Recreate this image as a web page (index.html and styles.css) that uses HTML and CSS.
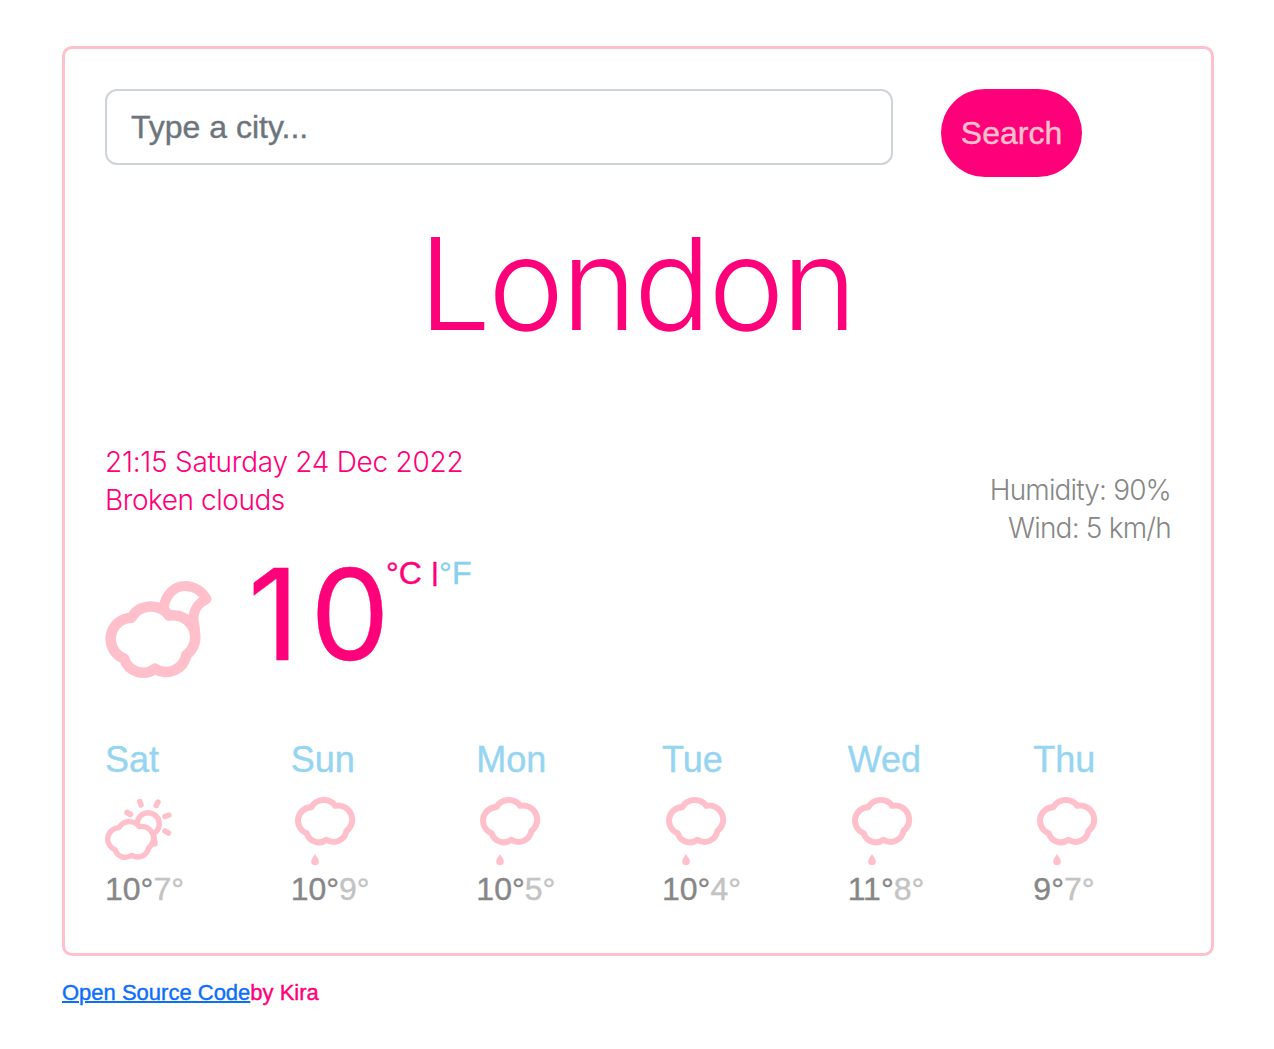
FILE: index.html
```html
<!DOCTYPE html>
<html lang="en">
<head>
<meta charset="utf-8">
<title>Weather</title>
<link rel="stylesheet" href="styles.css">
</head>
<body>
<svg width="0" height="0" class="defs">
  <defs>
    <path id="cloud" d="M26.500 37.700A21.200 21.200 0 0 0 19.300 78.700A19.700 19.700 0 0 0 50 88.700A20.500 20.500 0 0 0 81.300 75A22 22 0 0 0 64 35.700A22.500 22.500 0 0 0 26.500 37.700Z"/>
    <symbol id="rain" viewBox="0 0 68 70">
      <use href="#cloud" transform="translate(3.4 -14) scale(.64)" stroke-width="9.4"/>
      <path class="fill" d="M24 57C22.500 60 20.200 61.500 20.200 64.500A3.800 3.800 0 0 0 27.800 64.500C27.800 61.500 25.500 60 24 57Z"/>
    </symbol>
  </defs>
</svg>
<main class="card">
  <form class="search">
    <input class="city-input" type="text" placeholder="Type a city...">
    <button class="search-button" type="button">Search</button>
  </form>
  <h1 class="city">London</h1>
  <div class="overview">
    <ul class="summary">
      <li class="date">21:15 Saturday 24 Dec 2022</li>
      <li class="description">Broken clouds</li>
    </ul>
    <ul class="details">
      <li class="humidity">Humidity: 90%</li>
      <li class="wind">Wind: 5 km/h</li>
    </ul>
  </div>
  <div class="current">
    <svg class="icon current-icon" viewBox="0 0 108 100">
      <use href="#cloud" stroke-width="10.500"/>
      <path stroke-width="10" d="M58.500 29C60 14 70 6 80 6C89 6 97 11 101.500 19C93 23 88 31 88.500 40L90 50"/>
    </svg>
    <strong class="temperature"><span class="tens">1</span>0</strong>
    <span class="units">°C <span class="divider">|</span><span class="fahrenheit">°F</span></span>
  </div>
  <div class="forecast">
    <div class="day">
      <div class="name">Sat</div>
      <svg class="icon" viewBox="0 0 68 70">
        <use href="#cloud" transform="translate(-.3 10.300) scale(.54)" stroke-width="10"/>
        <path stroke-width="5.500" d="M32.500 24.500A11 11 0 1 1 48.500 36.500L50 47"/>
        <path stroke-width="5.500" d="M34.800 4.500L36 8M53 5L51.200 8.500M60 19.500L64 18M60 34L63.500 36M22 15.500L25.500 17.500"/>
      </svg>
      <div class="range">10°<span class="low">7°</span></div>
    </div>
    <div class="day">
      <div class="name">Sun</div>
      <svg class="icon"><use href="#rain"/></svg>
      <div class="range">10°<span class="low">9°</span></div>
    </div>
    <div class="day">
      <div class="name">Mon</div>
      <svg class="icon"><use href="#rain"/></svg>
      <div class="range">10°<span class="low">5°</span></div>
    </div>
    <div class="day">
      <div class="name">Tue</div>
      <svg class="icon"><use href="#rain"/></svg>
      <div class="range">10°<span class="low">4°</span></div>
    </div>
    <div class="day">
      <div class="name">Wed</div>
      <svg class="icon"><use href="#rain"/></svg>
      <div class="range">11°<span class="low">8°</span></div>
    </div>
    <div class="day">
      <div class="name">Thu</div>
      <svg class="icon"><use href="#rain"/></svg>
      <div class="range">9°<span class="low">7°</span></div>
    </div>
  </div>
</main>
<footer class="footer"><a class="source" href="#">Open Source Code</a>by Kira</footer>
</body>
</html>
```
FILE: styles.css
```css
* { box-sizing: border-box; }
body {
  margin: 0;
  padding: 46px 60px 0 62px;
  background: #fff;
  color: #ff007b;
  font-family: "Liberation Sans", Arial, sans-serif;
  -webkit-text-stroke-width: .4px;
}
.defs { display: block; }
ul { list-style: none; margin: 0; padding: 0; }
.card {
  height: 910px;
  border: 3px solid #ffc0cb;
  border-radius: 10px;
  padding: 40px;
}
.search { display: flex; align-items: flex-start; gap: 48px; }
.city-input {
  width: 788px;
  height: 76px;
  border: 2px solid #ced4da;
  border-radius: 12px;
  padding: 0 24px;
  font: 32px "Liberation Sans", Arial, sans-serif;
}
.city-input::placeholder { color: #6c757d; opacity: 1; }
.search-button {
  width: 141px;
  height: 88px;
  border: 0;
  border-radius: 44px;
  padding: 0;
  background: #ff007b;
  color: #ffc0cb;
  font: 32px "Liberation Sans", Arial, sans-serif;
  -webkit-text-stroke-width: .4px;
}
.city {
  margin: 30px 0 0;
  height: 154px;
  font: 300 128px/154px Inter, sans-serif;
  letter-spacing: -2.7px;
  text-indent: -3px;
  text-align: center;
  -webkit-text-stroke-width: 0;
}
.overview {
  display: flex;
  justify-content: space-between;
  margin-top: 82px;
  font: 300 28px/38px Inter, sans-serif;
  -webkit-text-stroke-width: 0;
}
.date { letter-spacing: -.27px; }
.description { letter-spacing: -.45px; }
.details { margin-top: 28px; color: #878787; text-align: right; }
.humidity { letter-spacing: -.85px; }
.wind { letter-spacing: -.8px; }
.current { display: flex; align-items: flex-start; height: 128px; margin-top: 8px; }
.icon {
  display: block;
  width: 68px;
  height: 70px;
  fill: none;
  stroke: #ffc0cb;
  stroke-linecap: round;
  stroke-linejoin: round;
}
.fill { fill: #ffc0cb; stroke: none; }
.current-icon { width: 108px; height: 100px; margin-top: 25px; }
.temperature {
  width: 138px;
  margin: -5px 0 0 35px;
  font: 400 126px/128px Inter, sans-serif;
  letter-spacing: -3px;
}
.tens { letter-spacing: 11px; }
.units { margin-top: 2px; font-size: 32px; line-height: 32px; }
.divider { display: inline-block; transform: translateY(-1px) scaleY(.8); }
.fahrenheit { color: #89cff0; }
.forecast { display: grid; grid-template-columns: repeat(6, 1fr); margin: 55px -48px 0 0; }
.name { height: 59px; font-size: 36px; line-height: 44px; color: #96d5f2; }
.range { font-size: 32px; line-height: 44px; color: #878787; }
.low { color: #c3c3c3; }
.footer { margin-top: 24px; font-size: 22px; line-height: 26px; }
.source { color: #0d6efd; text-decoration-thickness: 2px; }
```
